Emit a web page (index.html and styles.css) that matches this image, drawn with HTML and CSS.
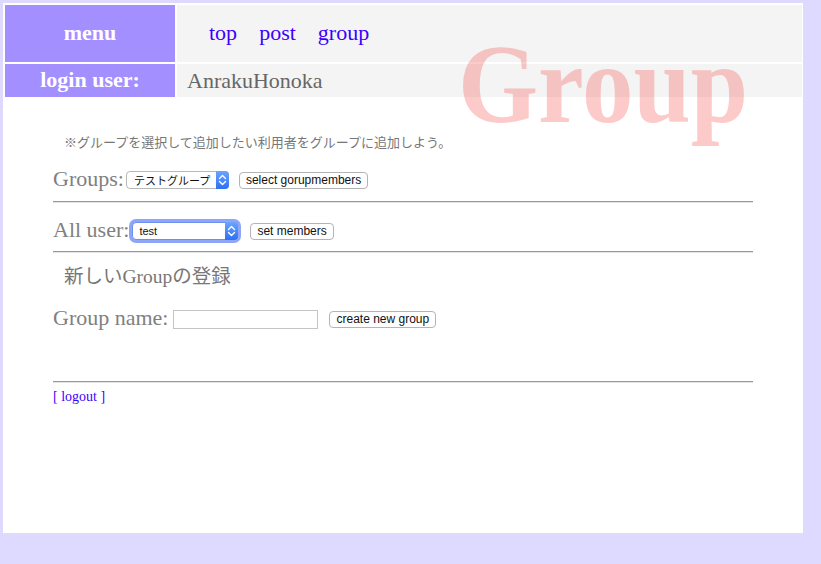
FILE: index.html
```html
<!DOCTYPE html>
<html lang="ja">
<head>
<meta charset="utf-8">
<title>Group</title>
<link rel="stylesheet" href="styles.css">
</head>
<body>
<div class="page">
  <div class="hdr">
    <div class="cell menu">menu</div>
    <nav class="cell nav"><a href="#">top</a><a href="#">post</a><a href="#">group</a></nav>
    <div class="cell menu">login user:</div>
    <div class="cell user">AnrakuHonoka</div>
  </div>
  <div class="title">Group</div>
  <main class="content">
    <p class="note">※グループを選択して追加したい利用者をグループに追加しよう。</p>
    <div class="row r-groups">
      <span class="lbl">Groups:</span>
      <span class="sel sel-groups"><span class="val">テストグループ</span><span class="step"><svg width="13" height="16" viewBox="0 0 13 16"><path d="M3.5 6.5 L6.5 3.5 L9.5 6.5 M3.5 9.5 L6.5 12.5 L9.5 9.5" fill="none" stroke="#fff" stroke-width="1.4" stroke-linecap="round" stroke-linejoin="round"/></svg></span></span>
      <button class="btn btn-select">select gorupmembers</button>
    </div>
    <hr class="rule">
    <div class="row r-users">
      <span class="lbl">All user:</span>
      <span class="sel sel-users focus"><span class="val">test</span><span class="step"><svg width="13" height="16" viewBox="0 0 13 16"><path d="M3.5 6.5 L6.5 3.5 L9.5 6.5 M3.5 9.5 L6.5 12.5 L9.5 9.5" fill="none" stroke="#fff" stroke-width="1.4" stroke-linecap="round" stroke-linejoin="round"/></svg></span></span>
      <button class="btn btn-set">set members</button>
    </div>
    <hr class="rule">
    <h2 class="sub">新しいGroupの登録</h2>
    <div class="row r-name">
      <span class="lbl">Group name:</span>
      <input class="inp" type="text">
      <button class="btn">create new group</button>
    </div>
    <hr class="rule rule-bottom">
    <a class="logout" href="#">[ logout ]</a>
  </main>
</div>
</body>
</html>
```
FILE: styles.css
```css
html, body {
  margin: 0;
  padding: 0;
}
body {
  background: #dedaff;
  overflow: hidden;
  font-family: "Liberation Serif", "Noto Sans CJK JP", serif;
}
.page {
  position: relative;
  margin: 3px;
  width: 800px;
  height: 530px;
  background: #fff;
}
.hdr {
  display: grid;
  grid-template-columns: 170px 625px;
  grid-template-rows: 57px 33px;
  gap: 2px;
  padding: 2px 1px 0 2px;
}
.cell {
  display: flex;
  align-items: center;
  font-size: 22px;
}
.menu {
  background: #a38fff;
  color: #fff;
  font-weight: bold;
  justify-content: center;
  padding-bottom: 1px;
}
.nav {
  background: #f4f4f4;
  padding-left: 32px;
  gap: 22px;
  padding-bottom: 1px;
}
.nav a {
  color: #3c00ff;
  text-decoration: none;
}
.user {
  background: #f4f4f4;
  color: #666;
  padding-left: 10px;
}
.title {
  position: absolute;
  left: 455px;
  top: 26px;
  font-size: 103px;
  line-height: 1;
  font-weight: bold;
  color: rgba(250, 80, 80, 0.3);
  transform: scaleY(1.08);
  transform-origin: 0 0;
  pointer-events: none;
}
.content {
  margin-left: 50px;
  width: 700px;
  color: #777;
}
.note {
  margin: 36px 0 0;
  padding-left: 11px;
  font-family: "Noto Sans CJK JP", sans-serif;
  font-size: 13px;
  line-height: 18px;
  color: #777;
}
.row {
  display: flex;
  align-items: center;
  height: 24px;
}
.r-groups { margin-top: 16px; }
.r-users { margin-top: 15px; }
.r-name { margin-top: 16px; }
.lbl {
  font-size: 22px;
  line-height: 24px;
  color: #808080;
}
.sel {
  position: relative;
  display: flex;
  align-items: center;
  box-sizing: border-box;
  height: 18px;
  border: 1px solid #b8b8b8;
  border-radius: 4px;
  background: #fff;
  font-family: "Liberation Sans", "Noto Sans CJK JP", sans-serif;
  font-size: 11px;
  color: #111;
}
.sel-groups {
  width: 103px;
  margin-left: 2px;
  margin-top: 1px;
}
.sel-users {
  width: 106px;
  margin-left: 3px;
  margin-top: 1px;
}
.sel.focus {
  border-color: #6f8ff0;
  box-shadow: 0 0 0 3px #8ea6f7;
}
.val {
  padding-left: 7px;
  flex: 1;
  white-space: nowrap;
}
.sel-users .val { padding-left: 6px; }
.step {
  display: flex;
  align-items: center;
  justify-content: center;
  width: 13px;
  height: 18px;
  margin: -1px -1px -1px 0;
  border-radius: 0 4px 4px 0;
  background: linear-gradient(#6aa5ff, #2f6ff2);
}
.btn {
  box-sizing: border-box;
  height: 17px;
  margin-left: 11px;
  margin-top: 2px;
  padding: 0 6px;
  border: 1px solid #b4b4b4;
  border-radius: 4px;
  background: #fff;
  font-family: "Liberation Sans", sans-serif;
  font-size: 12px;
  line-height: 15px;
  color: #111;
  white-space: nowrap;
}
.btn-select { margin-left: 10px; }
.btn-set { margin-left: 12px; }
.inp {
  box-sizing: border-box;
  width: 145px;
  height: 19px;
  margin: 2px 0 0 5px;
  border: 1px solid #c4c4c4;
  background: #fff;
  padding: 0;
}
.rule {
  margin: 10px 0 0;
  height: 0;
  border: 0;
  border-top: 1px solid #999;
  border-bottom: 1px solid #e4e4e4;
}
.r-users + .rule { margin-top: 9px; }
.rule-bottom { margin-top: 51px; }
.sub {
  margin: 11px 0 0;
  padding-left: 11px;
  font-family: "Liberation Serif", "Noto Sans CJK JP", serif;
  font-weight: normal;
  font-size: 19.5px;
  line-height: 26px;
  color: #777;
}
.logout {
  display: block;
  margin-top: 5px;
  font-size: 14px;
  line-height: 18px;
  color: #3c00ff;
  text-decoration: none;
}
```
